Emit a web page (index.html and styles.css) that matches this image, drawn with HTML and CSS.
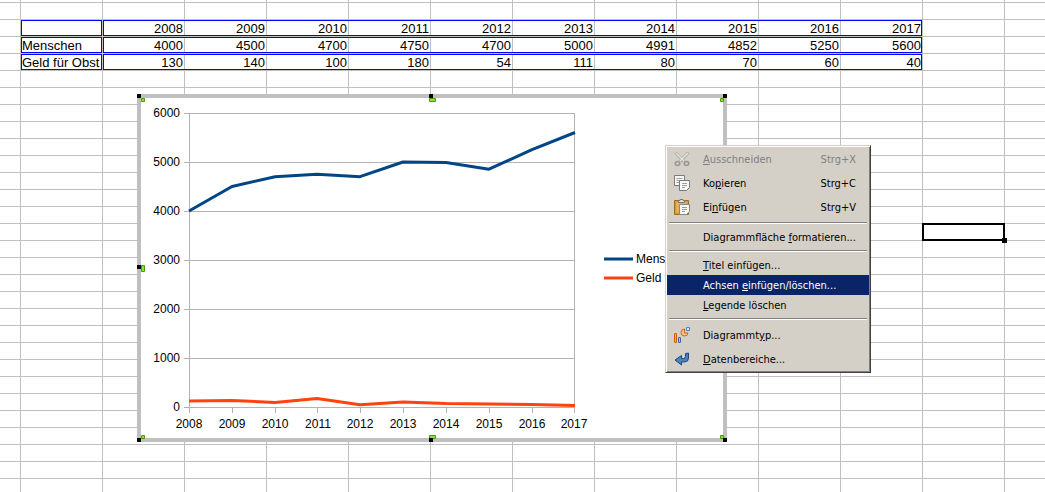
FILE: index.html
```html
<!DOCTYPE html>
<html lang="de">
<head>
<meta charset="utf-8">
<title>Tabelle</title>
<link rel="stylesheet" href="styles.css">
</head>
<body>
<main class="sheet">
  <table class="data">
    <tr><td class="label"></td><td>2008</td><td>2009</td><td>2010</td><td>2011</td><td>2012</td><td>2013</td><td>2014</td><td>2015</td><td>2016</td><td>2017</td></tr>
    <tr><th class="label" scope="row">Menschen</th><td>4000</td><td>4500</td><td>4700</td><td>4750</td><td>4700</td><td>5000</td><td>4991</td><td>4852</td><td>5250</td><td>5600</td></tr>
    <tr><th class="label" scope="row">Geld für Obst</th><td>130</td><td>140</td><td>100</td><td>180</td><td>54</td><td>111</td><td>80</td><td>70</td><td>60</td><td>40</td></tr>
  </table>

  <div class="cell-cursor"></div>

  <section class="chart" aria-label="Diagramm">
    <svg class="plot" width="590" height="348" viewBox="137 94 590 348">
      <g class="axis">
        <path d="M184 113.5H575M184 162.5H575M184 211.5H575M184 260.5H575M184 309.5H575M184 358.5H575M184 407.5H575"/>
        <path d="M189.500 113V413M574.500 113V413M232.500 407V413M275.500 407V413M317.500 407V413M360.500 407V413M403.500 407V413M446.500 407V413M489.500 407V413M532.500 407V413"/>
      </g>
      <path class="line people" d="M189 211L232 186.500L275 176.700L317 174.200L360 176.700L403 162L446 162.400L489 169.200L532 149.700L575 132.500"/>
      <path class="line money" d="M189 401L232 400.500L275 402.500L317 398.500L360 404.700L403 402L446 403.500L489 404L532 404.500L575 405.500"/>
      <g class="values">
        <text x="180" y="117">6000</text><text x="180" y="166">5000</text><text x="180" y="215">4000</text><text x="180" y="264">3000</text><text x="180" y="313">2000</text><text x="180" y="362">1000</text><text x="180" y="411">0</text>
      </g>
      <g class="years">
        <text x="189" y="428">2008</text><text x="232" y="428">2009</text><text x="275" y="428">2010</text><text x="318" y="428">2011</text><text x="360" y="428">2012</text><text x="403" y="428">2013</text><text x="446" y="428">2014</text><text x="489" y="428">2015</text><text x="532" y="428">2016</text><text x="574" y="428">2017</text>
      </g>
      <path class="line people" d="M604 259H633"/><path class="line money" d="M604 278H633"/>
      <g><text x="636" y="263">Menschen</text><text x="636" y="282">Geld für Obst</text></g>
      <path class="frame" d="M139 96H725V440H139Z"/>
      <g class="grips">
        <path d="M141.500 98.500h3v3h-3zM429.500 98.500h6v3h-6zM720.500 98.500h3v3h-3zM141.500 265.500h3v6h-3zM141.500 435.500h3v3h-3zM429.500 435.500h6v3h-6zM720.500 435.500h3v3h-3z"/>
      </g>
      <path class="handles" d="M137 94h4v4h-4zM429 94h4v4h-4zM723 94h4v4h-4zM137 265h4v4h-4zM137 438h4v4h-4zM429 438h4v4h-4zM723 438h4v4h-4z"/>
    </svg>
  </section>

  <nav class="menu" aria-label="Kontextmenü">
    <button class="item tall" disabled>
      <svg class="icon" viewBox="0 0 16 16" fill="none"><path d="M1.500 1.500L10 10.500M14.500 1.500L6 10.500" stroke="#aeaca6" stroke-width="3"/><path d="M2 2l8 8M14 2l-8 8" stroke="#e8e6e1" stroke-width="1.200"/><g stroke="#9a9892" stroke-width="1.600"><ellipse cx="3.500" cy="12.500" rx="2.200" ry="2"/><ellipse cx="12.500" cy="12.500" rx="2.200" ry="2"/></g></svg>
      <span class="name"><u>A</u>usschneiden</span><span class="key">Strg+X</span>
    </button>
    <button class="item tall">
      <svg class="icon" viewBox="0 0 16 16"><path d="M.5.500h10v10H.5z" fill="#f6f6f4" stroke="#77797a"/><path d="M2.500 3.500h6M2.500 5.500h5M2.500 7.500h3" stroke="#a0a0a0"/><path d="M5.500 5.500h10v7l-3 3h-7z" fill="#f8f8f7" stroke="#77797a"/><path d="M8 8.500h5M8 10.500h5M8 12.500h3" stroke="#a0a0a0"/></svg>
      <span class="name">Ko<u>p</u>ieren</span><span class="key">Strg+C</span>
    </button>
    <button class="item tall">
      <svg class="icon" viewBox="0 0 16 16"><path d="M.5 1.500h14v14H.5z" fill="#d99a3e" stroke="#a06a1d"/><path d="M2.500 3.500h10v10h-10z" fill="#e8b364"/><path d="M4.500 3.500v-2h1.500V.500h3v1h1.500v2z" fill="#e2e2df" stroke="#74766f"/><path d="M5.500 5.500h10v7l-3 3h-7z" fill="#f8f8f7" stroke="#85868a"/><path d="M8 8.500h5M8 10.500h5M8 12.500h3" stroke="#999"/></svg>
      <span class="name">Ei<u>n</u>fügen</span><span class="key">Strg+V</span>
    </button>
    <hr class="rule">
    <button class="item"><span class="name">Diagrammfläche <u>f</u>ormatieren...</span></button>
    <hr class="rule">
    <button class="item"><span class="name"><u>T</u>itel einfügen...</span></button>
    <button class="item active"><span class="name">Achsen <u>e</u>infügen/löschen...</span></button>
    <button class="item"><span class="name"><u>L</u>egende löschen</span></button>
    <hr class="rule">
    <button class="item tall">
      <svg class="icon" viewBox="0 0 16 16"><rect x=".5" y="6.500" width="2" height="9" rx=".5" fill="#fcaf3e" stroke="#ce5c00"/><rect x="4.500" y="10.500" width="2" height="5" rx=".5" fill="#a9c6e8" stroke="#3465a4"/><path d="M10.500 2A3.500 3.500 0 1 0 14 6h-3.500z" fill="#fcc58a" stroke="#c8651c"/><path d="M12.500 3.500v-3h3v3z" fill="#d6e4f3" stroke="#5580b5"/></svg>
      <span class="name">Diagrammt<u>y</u>p...</span>
    </button>
    <button class="item tall">
      <svg class="icon" viewBox="0 0 16 16"><path d="M11.500 2.500l3-.5v5q0 4-4 4H7.500v3L1 9l6.500-4.500v3h2q2 0 2-2z" fill="#4a82c0" stroke="#20477b"/></svg>
      <span class="name"><u>D</u>atenbereiche...</span>
    </button>
  </nav>
</main>
</body>
</html>
```
FILE: styles.css
```css
body {
  margin: 0;
  background: #fff;
  color: #000;
  font: 13px/16px "Liberation Sans", Arial, sans-serif;
}

.sheet {
  position: relative;
  box-sizing: border-box;
  min-height: 100vh;
  padding: 20px 0 0 21px;
  overflow: hidden;
  background:
    repeating-linear-gradient(to right, #c0c0c0 0 1px, transparent 1px 82px) 20px 0,
    repeating-linear-gradient(to bottom, #c0c0c0 0 1px, transparent 1px 17px) 0 2px;
  background-size: 82px 100%, 100% 17px;
}

.data {
  table-layout: fixed;
  width: 902px;
  border-collapse: separate;
  border-spacing: 0;
}

.data td,
.data th {
  box-sizing: border-box;
  width: 82px;
  height: 17px;
  padding: 1px 2px 0 1px;
  font-weight: normal;
  line-height: 16px;
  text-align: right;
  white-space: nowrap;
  background:
    linear-gradient(#00f, #00f) 0 0 / 100% 1px no-repeat,
    linear-gradient(#00f, #00f) 0 15px / 100% 1px no-repeat;
}

.data .label {
  text-align: left;
  background:
    linear-gradient(#00f, #00f) 0 0 / 81px 1px no-repeat,
    linear-gradient(#00f, #00f) 0 15px / 81px 1px no-repeat,
    linear-gradient(#00f, #00f) 0 0 / 1px 16px no-repeat,
    linear-gradient(#00f, #00f) 80px 0 / 1px 16px no-repeat;
}

.data .label + td {
  background:
    linear-gradient(#00f, #00f) 0 0 / 100% 1px no-repeat,
    linear-gradient(#00f, #00f) 0 15px / 100% 1px no-repeat,
    linear-gradient(#00f, #00f) 0 0 / 1px 16px no-repeat;
}

.data td:last-child {
  background:
    linear-gradient(#00f, #00f) 0 0 / 81px 1px no-repeat,
    linear-gradient(#00f, #00f) 0 15px / 81px 1px no-repeat,
    linear-gradient(#00f, #00f) 80px 0 / 1px 16px no-repeat;
}

.cell-cursor {
  position: absolute;
  left: 922px;
  top: 223px;
  box-sizing: border-box;
  width: 83px;
  height: 18px;
  border: 2px solid #000;
}

.cell-cursor::after {
  content: "";
  position: absolute;
  right: -4px;
  bottom: -4px;
  width: 5px;
  height: 5px;
  background: #000;
}

.chart {
  position: absolute;
  left: 137px;
  top: 94px;
  background: #fff;
  font-size: 12px;
}

.plot { display: block; }
.axis { fill: none; stroke: #b3b3b3; }
.line { fill: none; stroke-width: 3; stroke-linejoin: round; }
.people { stroke: #004586; }
.money { stroke: #ff420e; }
.values { text-anchor: end; }
.years { text-anchor: middle; }
.frame { fill: none; stroke: #c0c0c0; stroke-width: 4; }
.grips { fill: #8ae234; stroke: #4e9a06; }

.menu {
  position: absolute;
  left: 665px;
  top: 145px;
  box-sizing: border-box;
  width: 206px;
  border: 1px solid;
  border-color: #d4d0c8 #404040 #404040 #d4d0c8;
  padding: 1px;
  background: #d4d0c8;
  box-shadow: inset 1px 1px #fff, inset -1px -1px #808080;
  font: 11px/16px "DejaVu Sans Condensed", Tahoma, sans-serif;
}

.item {
  display: flex;
  align-items: center;
  width: 100%;
  height: 20px;
  border: 0;
  padding: 0 13px 0 36px;
  background: none;
  color: #000;
  font: inherit;
  white-space: nowrap;
}

.name, .key { padding-top: 2px; }
.tall { height: 24px; padding-left: 7px; }
.icon { width: 16px; height: 16px; margin-right: 13px; }
.key { margin-left: auto; }
.item:disabled { color: #808080; }
.active { background: #0a246a; color: #fff; }

.rule {
  height: 1px;
  margin: 3px 2px;
  border: 0;
  border-top: 1px solid #808080;
  background: #fff;
}
```
